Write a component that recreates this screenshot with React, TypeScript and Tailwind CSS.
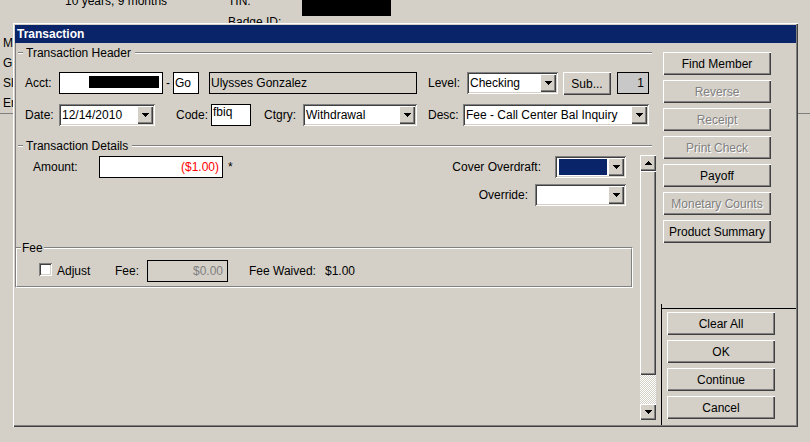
import React from "react";

const RAISED =
  "shadow-[inset_1px_1px_0_#fff,inset_-1px_-1px_0_#404040,inset_-2px_-2px_0_#808080]";
const SUNKEN =
  "shadow-[inset_1px_1px_0_#808080,inset_-1px_-1px_0_#fff,inset_2px_2px_0_#404040,inset_-2px_-2px_0_#d4d0c8]";

type P = { children?: React.ReactNode; className?: string };

function Down() {
  return (
    <svg width="7" height="4" shapeRendering="crispEdges" fill="#000">
      <rect x="0" y="0" width="7" height="1" />
      <rect x="1" y="1" width="5" height="1" />
      <rect x="2" y="2" width="3" height="1" />
      <rect x="3" y="3" width="1" height="1" />
    </svg>
  );
}

function Up() {
  return (
    <svg width="7" height="4" shapeRendering="crispEdges" fill="#000">
      <rect x="3" y="0" width="1" height="1" />
      <rect x="2" y="1" width="3" height="1" />
      <rect x="1" y="2" width="5" height="1" />
      <rect x="0" y="3" width="7" height="1" />
    </svg>
  );
}

function Btn({
  children,
  className = "",
  disabled = false,
}: P & { disabled?: boolean }) {
  return (
    <div
      className={`flex items-center justify-center whitespace-nowrap bg-[#d4d0c8] ${RAISED} ${
        disabled ? "text-[#808080] [text-shadow:1px_1px_0_#fff]" : "text-black"
      } ${className}`}
    >
      {children}
    </div>
  );
}

function Combo({ children, className = "" }: P) {
  return (
    <div className={`flex h-[22px] bg-white p-[2px] ${SUNKEN} ${className}`}>
      <div className="flex flex-1 items-center overflow-hidden whitespace-nowrap pl-[1px]">
        {children}
      </div>
      <div
        className={`flex w-[16px] items-center justify-center bg-[#d4d0c8] ${RAISED}`}
      >
        <Down />
      </div>
    </div>
  );
}

function Label({ children, className = "" }: P) {
  return (
    <span className={`flex h-[22px] items-center whitespace-nowrap ${className}`}>
      {children}
    </span>
  );
}

function GroupLine({ label }: { label: string }) {
  return (
    <div className="mr-[7px] flex h-[14px] items-center">
      <div className="ml-[2px] h-[2px] w-[5px] border-t border-[#808080] bg-white" />
      <span className="ml-[3px] whitespace-nowrap">{label}</span>
      <div className="ml-[4px] h-[2px] flex-1 border-t border-[#808080] bg-white" />
    </div>
  );
}

export default function App() {
  return (
    <div className="relative h-[442px] w-[810px] overflow-hidden bg-[#d4d0c8] font-['Liberation_Sans',Arial,sans-serif] text-[12px] leading-[14px] text-black">
      {/* underlying window */}
      <div className="flex h-[15px] items-start">
        <span className="-mt-[6px] w-[228px] whitespace-nowrap pl-[65px]">
          10 years, 9 months
        </span>
        <span className="-mt-[6px] w-[74px]">TIN:</span>
        <div className="h-[16px] w-[89px] bg-black" />
      </div>
      <div className="pl-[228px]">Badge ID:</div>
      <div className="mt-[4px] flex flex-col pl-[3px] leading-[20px]">
        <span>M</span>
        <span>G</span>
        <span>Sl</span>
        <span>Er</span>
      </div>
      <div className="h-[1px] bg-[#808080]" />

      {/* dialog */}
      <div
        className={`absolute left-[13px] top-[23px] flex h-[404px] w-[785px] flex-col bg-[#d4d0c8] p-[2px] shadow-[inset_1px_1px_0_#fff,inset_-1px_-1px_0_#404040,inset_-2px_-2px_0_#808080]`}
      >
        <div className="h-[18px] bg-[#0a246a] pl-[2px] font-bold leading-[18px] text-white">
          Transaction
        </div>
        <div className="flex flex-1">
          {/* left column */}
          <div className="flex w-[644px] flex-col">
            <div className="border-l border-[#808080]">
              <div className="pt-[3px]">
                <GroupLine label="Transaction Header" />
              </div>
              {/* row 1 */}
              <div className="mt-[12px] flex h-[22px] items-start">
                <Label className="w-[43px] pl-[9px]">Acct:</Label>
                <div className="flex h-[22px] w-[104px] items-start border border-black bg-white pl-[29px] pt-[3px]">
                  <div className="h-[12px] w-[70px] bg-black" />
                </div>
                <Label className="w-[10px] justify-center">-</Label>
                <div className="flex h-[22px] w-[26px] items-center border border-black bg-white pl-[1px]">
                  Go
                </div>
                <div className="ml-[10px] flex h-[22px] w-[208px] items-center border border-black bg-[#d4d0c8] pl-[1px]">
                  Ulysses Gonzalez
                </div>
                <Label className="w-[50px] pl-[11px]">Level:</Label>
                <Combo className="w-[91px]">Checking</Combo>
                <Btn className="ml-[5px] h-[23px] w-[48px]">Sub...</Btn>
                <div className="ml-[6px] flex h-[22px] w-[32px] items-center justify-end border border-black bg-[#c8c8c8] pr-[4px]">
                  1
                </div>
              </div>
              {/* row 2 */}
              <div className="mt-[10px] flex h-[22px] items-start">
                <Label className="w-[43px] pl-[9px]">Date:</Label>
                <Combo className="w-[96px]">12/14/2010</Combo>
                <Label className="w-[56px] pl-[21px]">Code:</Label>
                <div className="flex h-[22px] w-[40px] items-start border border-black bg-white pl-[1px]">
                  fbiq
                </div>
                <Label className="w-[52px] pl-[13px]">Ctgry:</Label>
                <Combo className="w-[114px]">Withdrawal</Combo>
                <Label className="w-[46px] pl-[11px]">Desc:</Label>
                <Combo className="w-[186px]">Fee - Call Center Bal Inquiry</Combo>
              </div>
              <div className="mt-[13px]">
                <GroupLine label="Transaction Details" />
              </div>
            </div>

            {/* bottom part */}
            <div className="flex flex-1">
              <div className="flex w-[618px] flex-col">
                <div className="h-[94px] border-l border-[#808080] pt-[3px]">
                  <div className="flex h-[22px] items-center">
                    <Label className="w-[83px] pl-[17px]">Amount:</Label>
                    <div className="flex h-[22px] w-[124px] items-center justify-end border border-black bg-white pr-[3px] text-[#ff0000]">
                      ($1.00)
                    </div>
                    <span className="ml-[5px]">*</span>
                    <div className="flex-1" />
                    <Label className="mr-[14px]">Cover Overdraft:</Label>
                    <Combo className="mr-[7px] w-[71px]">
                      <div className="ml-[1px] mr-[1px] h-[16px] flex-1 bg-[#0a246a]" />
                    </Combo>
                  </div>
                  <div className="mt-[6px] flex h-[22px] items-center justify-end">
                    <Label className="mr-[7px]">Override:</Label>
                    <Combo className="mr-[7px] w-[91px]" />
                  </div>
                </div>
                {/* fee frame */}
                <div className="relative h-[41px] border border-b-white border-l-[#808080] border-r-white border-t-[#808080]">
                  <span className="absolute -top-[7px] left-[5px] bg-[#d4d0c8] px-[1px]">
                    Fee
                  </span>
                  <div className="flex h-full items-start border border-b-[#808080] border-l-white border-r-[#808080] border-t-white pt-[11px]">
                    <div className={`ml-[22px] mt-[3px] h-[13px] w-[13px] bg-white ${SUNKEN}`} />
                    <Label className="w-[58px] pl-[5px]">Adjust</Label>
                    <Label className="w-[37px] pl-[5px]">Fee:</Label>
                    <div className="flex h-[22px] w-[81px] items-center justify-end border border-black bg-[#d4d0c8] pr-[4px] text-[#808080]">
                      $0.00
                    </div>
                    <Label className="ml-[21px] w-[76px]">Fee Waived:</Label>
                    <Label>$1.00</Label>
                  </div>
                </div>
              </div>
              {/* scrollbar */}
              <div className="ml-[7px] mt-[2px] flex h-[265px] w-[16px] flex-col">
                <div className={`flex h-[16px] items-center justify-center bg-[#d4d0c8] ${RAISED}`}>
                  <Up />
                </div>
                <div className={`h-[204px] bg-[#d4d0c8] ${RAISED}`} />
                <div className="flex-1 bg-[image:repeating-conic-gradient(#fff_0%_25%,#d4d0c8_0%_50%)] bg-[length:2px_2px]" />
                <div className={`flex h-[16px] items-center justify-center bg-[#d4d0c8] ${RAISED}`}>
                  <Down />
                </div>
              </div>
            </div>
          </div>

          {/* right column */}
          <div className="flex w-[137px] flex-col">
            <div className="flex flex-col gap-[5px] pl-[4px] pt-[9px]">
              <Btn className="h-[23px] w-[108px]">Find Member</Btn>
              <Btn className="h-[23px] w-[108px]" disabled>
                Reverse
              </Btn>
              <Btn className="h-[23px] w-[108px]" disabled>
                Receipt
              </Btn>
              <Btn className="h-[23px] w-[108px]" disabled>
                Print Check
              </Btn>
              <Btn className="h-[23px] w-[108px]">Payoff</Btn>
              <Btn className="h-[23px] w-[108px]" disabled>
                Monetary Counts
              </Btn>
              <Btn className="h-[23px] w-[108px]">Product Summary</Btn>
            </div>
            <div className="ml-[2px] mt-auto h-[121px] border-l border-black pt-[4px]">
              <div className="flex flex-col gap-[5px] border-t border-black pl-[5px] pt-[3px]">
                <Btn className="h-[23px] w-[108px]">Clear All</Btn>
                <Btn className="h-[23px] w-[108px]">OK</Btn>
                <Btn className="h-[23px] w-[108px]">Continue</Btn>
                <Btn className="h-[23px] w-[108px]">Cancel</Btn>
              </div>
            </div>
          </div>
        </div>
      </div>
    </div>
  );
}
